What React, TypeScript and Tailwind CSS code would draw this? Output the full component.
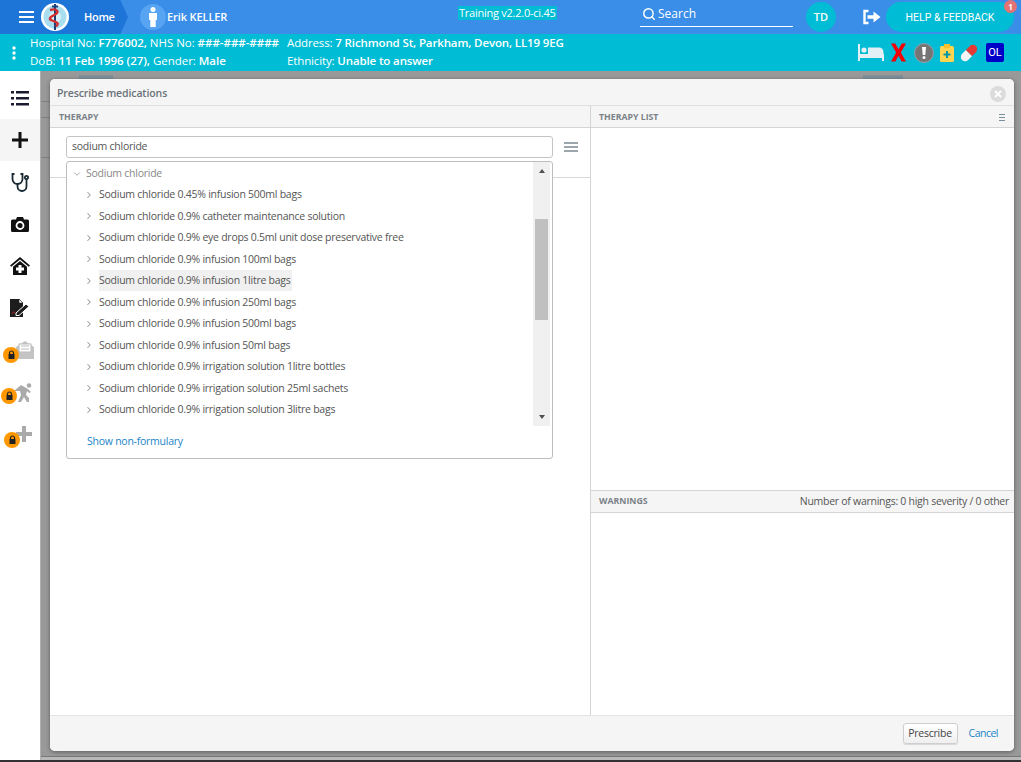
import React from "react";
import { ChevronRight, ChevronDown, Search } from "lucide-react";

const items = [
  "Sodium chloride 0.45% infusion 500ml bags",
  "Sodium chloride 0.9% catheter maintenance solution",
  "Sodium chloride 0.9% eye drops 0.5ml unit dose preservative free",
  "Sodium chloride 0.9% infusion 100ml bags",
  "Sodium chloride 0.9% infusion 1litre bags",
  "Sodium chloride 0.9% infusion 250ml bags",
  "Sodium chloride 0.9% infusion 500ml bags",
  "Sodium chloride 0.9% infusion 50ml bags",
  "Sodium chloride 0.9% irrigation solution 1litre bottles",
  "Sodium chloride 0.9% irrigation solution 25ml sachets",
  "Sodium chloride 0.9% irrigation solution 3litre bags",
];

function LockBadge({ className }: { className: string }) {
  return (
    <span className={`absolute w-[16px] h-[16px] rounded-full bg-[#ff9800] flex items-center justify-center ${className}`}>
      <svg width="9" height="10" viewBox="0 0 9 10">
        <path d="M2.500 4V3a2 2 0 0 1 4 0v1" fill="none" stroke="#222" strokeWidth="1.2" />
        <rect x="1.500" y="4" width="6" height="5" fill="#222" />
      </svg>
    </span>
  );
}

function SideIcon({ children, active }: { children: React.ReactNode; active?: boolean }) {
  return (
    <div className={`relative h-[42px] flex items-center justify-center ${active ? "bg-[#f5f5f5]" : ""}`}>{children}</div>
  );
}

export default function App() {
  return (
    <div className="w-[1021px] h-[762px] overflow-hidden flex flex-col bg-[#999999] font-['Open_Sans',sans-serif] text-[11px]">
      {/* Top bar */}
      <header className="h-[34px] shrink-0 flex items-center bg-[#3a8ee8] text-white relative">
        <div className="h-full w-[128px] bg-[#1e75d8] flex items-center pl-[19px] shrink-0 [clip-path:polygon(0_0,94%_0,100%_50%,94%_100%,0_100%)]">
          <svg width="15" height="12" viewBox="0 0 15 12" className="shrink-0">
            <rect y="0" width="15" height="2" fill="#fff" />
            <rect y="5" width="15" height="2" fill="#fff" />
            <rect y="10" width="15" height="2" fill="#fff" />
          </svg>
          <svg width="28" height="28" viewBox="0 0 28 28" className="ml-[7px] shrink-0">
            <circle cx="14" cy="14" r="14" fill="#fff" />
            <circle cx="14" cy="14" r="11.500" fill="#a9def0" />
            <circle cx="14" cy="14" r="6" fill="#d8f1f8" />
            <path d="M14 1v26" stroke="#1f3f78" strokeWidth="2" />
            <path d="M9 7c7-2 10 2 5 4.500s-7 4.500-3 6 8 2 4 6" fill="none" stroke="#d32f2f" strokeWidth="2.400" />
            <path d="M11 3.500h6" stroke="#1f3f78" strokeWidth="2" />
          </svg>
          <span className="ml-[15px] font-semibold text-[11px] tracking-[-0.3px]">Home</span>
        </div>
        <div className="w-[26px] h-[26px] rounded-full bg-[#57a4f2] flex items-center justify-center ml-[12px] shrink-0">
          <svg width="10" height="20" viewBox="0 0 10 20">
            <circle cx="5" cy="2.600" r="2.500" fill="#fff" />
            <path d="M1 6h8v7H7.700v7H2.300v-7H1z" fill="#fff" />
          </svg>
        </div>
        <span className="ml-[1px] font-semibold text-[11px] tracking-[-0.1px]">Erik KELLER</span>
        <span className="absolute left-[458px] top-[6px] bg-[#00bcd4] text-[11px] font-medium leading-[14px] px-[1px] tracking-[-0.25px]">Training v2.2.0-ci.45</span>
        <div className="absolute left-[640px] top-[2px] w-[153px] h-[25px] border-b border-white flex items-center gap-[2px] pl-[2px]">
          <Search size={14} strokeWidth={2.5} />
          <span className="text-[12px]">Search</span>
        </div>
        <div className="absolute left-[806px] top-[2px] w-[30px] h-[30px] rounded-full bg-[#00bcd4] flex items-center justify-center text-[11px] font-semibold">TD</div>
        <svg width="19" height="16" viewBox="0 0 19 16" className="absolute left-[862px] top-[9px]">
          <path d="M6.500 2H2.500v12h4" fill="none" stroke="#fff" strokeWidth="2.400" />
          <path d="M5.500 6.200h6V2.500L18.500 8l-7 5.500V9.800h-6z" fill="#fff" />
        </svg>
        <div className="absolute left-[886px] top-[2px] w-[128px] h-[30px] rounded-full bg-[#00bcd4] flex items-center justify-center text-[10.5px] font-['Roboto',sans-serif] pt-[1px]">HELP &amp; FEEDBACK</div>
        <span className="absolute left-[1004px] top-[0px] w-[13px] h-[13px] rounded-full bg-[#e57373] flex items-center justify-center text-[8px] font-bold">1</span>
      </header>

      {/* Patient bar */}
      <div className="h-[37px] shrink-0 bg-[#00bcd4] text-white flex items-center relative text-[11.5px] leading-[18px]">
        <svg width="4" height="14" viewBox="0 0 4 14" className="ml-[12px] shrink-0">
          <circle cx="2" cy="2" r="1.700" fill="#fff" />
          <circle cx="2" cy="7" r="1.700" fill="#fff" />
          <circle cx="2" cy="12" r="1.700" fill="#fff" />
        </svg>
        <div className="ml-[14px] w-[257px] shrink-0 whitespace-nowrap tracking-[-0.03px] mb-[2px]">
          <div>Hospital No: <b className="font-semibold">F776002,</b> NHS No: <b className="font-semibold">###-###-####</b></div>
          <div>DoB: <b className="font-semibold">11 Feb 1996 (27),</b> Gender: <b className="font-semibold">Male</b></div>
        </div>
        <div className="whitespace-nowrap tracking-[-0.13px] mb-[2px]">
          <div>Address: <b className="font-semibold">7 Richmond St, Parkham, Devon, LL19 9EG</b></div>
          <div>Ethnicity: <b className="font-semibold">Unable to answer</b></div>
        </div>
        <div className="ml-auto mr-[17px] flex items-center">
          <svg width="26" height="17" viewBox="0 0 26 17">
            <path d="M0 0h2v10h24v7h-2v-3H2v3H0z" fill="#e3f0f6" />
            <circle cx="6" cy="6" r="2.600" fill="#e3f0f6" />
            <path d="M10 3.500h11a4.500 4.500 0 0 1 4.500 4.500v2H10z" fill="#e3f0f6" />
          </svg>
          <svg width="15" height="19" viewBox="0 0 16 19" className="ml-[7px]">
            <path d="M0 0h4.500L8 6l3.500-6H16l-5.500 9.500L16 19h-4.700L8 13l-3.300 6H0l5.500-9.500z" fill="#f40000" />
          </svg>
          <span className="w-[20px] h-[20px] rounded-full bg-[#757575] border border-[#90a4ae] flex items-center justify-center ml-[8px]">
            <svg width="4" height="12" viewBox="0 0 4 12"><path d="M0 0h4l-.7 8H.7z" fill="#fff" /><circle cx="2" cy="10.500" r="1.500" fill="#fff" /></svg>
          </span>
          <svg width="14" height="18" viewBox="0 0 14 18" className="ml-[6px]">
            <rect x="0" y="2" width="14" height="16" rx="1.500" fill="#ffd54f" />
            <rect x="4" y="0" width="6" height="4" fill="#fbc02d" />
            <path d="M6 7h2v2.500h2.500v2H8V14H6v-2.500H3.500v-2H6z" fill="#0097a7" />
          </svg>
          <svg width="18" height="18" viewBox="0 0 18 18" className="ml-[6px]">
            <g transform="rotate(-45 9 9)">
              <path d="M9 4.700H3.500a4.300 4.300 0 0 0 0 8.600H9z" fill="#f5f5f5" />
              <path d="M9 4.700h5.500a4.300 4.300 0 0 1 0 8.600H9z" fill="#e53935" />
            </g>
          </svg>
          <span className="w-[18px] h-[19px] bg-[#0000c8] rounded-[2px] flex items-center justify-center text-[11px] ml-[8px] font-['Roboto',sans-serif]">OL</span>
        </div>
      </div>

      {/* Body */}
      <div className="flex flex-1 min-h-0">
        <aside className="w-[41px] shrink-0 bg-white border-r border-[#b0b0b0] pt-[6px]">
          <SideIcon>
            <svg width="18" height="15" viewBox="0 0 18 15">
              <g fill="#1b1b2f"><rect width="3" height="2.500" /><rect x="5" width="13" height="2.500" /><rect y="6" width="3" height="2.500" /><rect x="5" y="6" width="13" height="2.500" /><rect y="12" width="3" height="2.500" /><rect x="5" y="12" width="13" height="2.500" /></g>
            </svg>
          </SideIcon>
          <SideIcon active>
            <svg width="16" height="16" viewBox="0 0 16 16"><path d="M6.500 0h3v6.500H16v3H9.500V16h-3V9.500H0v-3h6.500z" fill="#111" /></svg>
          </SideIcon>
          <SideIcon>
            <svg width="19" height="19" viewBox="0 0 19 19" fill="none" stroke="#1a2a33" strokeWidth="1.800">
              <path d="M3.500 1H1.500v5a5 5 0 0 0 10 0V1H9.500" />
              <path d="M6.500 11v2.500a4.500 4.500 0 0 0 9 0V6" />
              <circle cx="15.500" cy="4.500" r="1.600" />
            </svg>
          </SideIcon>
          <SideIcon>
            <svg width="18" height="15" viewBox="0 0 18 15">
              <path d="M0 4a1.500 1.500 0 0 1 1.500-1.500H5L6 0h6l1 2.500h3.500A1.500 1.500 0 0 1 18 4v9.500a1.500 1.500 0 0 1-1.500 1.500h-15A1.500 1.500 0 0 1 0 13.500z" fill="#111" />
              <circle cx="9" cy="8.500" r="3.500" fill="none" stroke="#fff" strokeWidth="1.800" />
            </svg>
          </SideIcon>
          <SideIcon>
            <svg width="20" height="18" viewBox="0 0 20 18">
              <path d="M10 0 20 8.500l-1.200 1.300L10 2.500 1.200 9.800 0 8.500z" fill="#111" />
              <path d="M10 4l7 5.800V18H3V9.800z" fill="#111" />
              <path d="M8.500 8h3v2.500H14v3h-2.500V16h-3v-2.500H6v-3h2.500z" fill="#fff" />
            </svg>
          </SideIcon>
          <SideIcon>
            <svg width="20" height="18" viewBox="0 0 20 18">
              <path d="M0 0h9l4 4v14H0z" fill="#1d1d1d" />
              <path d="M9 0l4 4H9z" fill="#fff" stroke="#1d1d1d" strokeWidth=".6" />
              <path d="M6 14l10-9 3 2.500-10 9H6z" fill="#1d1d1d" stroke="#fff" strokeWidth="1" />
              <path d="M2 15c1-2 2-3 3-1" stroke="#c62828" strokeWidth="1" fill="none" />
            </svg>
          </SideIcon>
          <SideIcon>
            <svg width="18" height="18" viewBox="0 0 18 18" className="ml-[9px]">
              <path d="M0 6 9 0l9 6v12H0z" fill="#c4c4c4" />
              <rect x="3" y="3" width="12" height="8" fill="#fff" stroke="#bbb" />
              <path d="M5 5h8M5 8h8" stroke="#bbb" />
            </svg>
            <LockBadge className="left-[3px] top-[18px]" />
          </SideIcon>
          <SideIcon>
            <svg width="22" height="19" viewBox="0 0 22 19" className="ml-[9px]">
              <circle cx="15" cy="2.500" r="2.300" fill="#aaa" />
              <path d="M0 8 7 2l7 4 3 3-2 1-2-2-1 4 3 3v4h-2l-3-5-3 5H4l3-7-1-4z" fill="#aaa" />
            </svg>
            <LockBadge className="left-[1px] top-[17px]" />
          </SideIcon>
          <SideIcon>
            <svg width="16" height="16" viewBox="0 0 16 16" className="ml-[8px]"><path d="M6 0h4v6h6v4h-6v6H6v-6H0V6h6z" fill="#aaa" /></svg>
            <LockBadge className="left-[4px] top-[19px]" />
          </SideIcon>
        </aside>

        {/* Dialog area */}
        <main className="flex-1 min-w-0 flex flex-col relative">
          {/* Page showing through behind the dialog */}
          <div className="h-[8px] shrink-0 flex items-end">
            <span className="ml-[38px] w-[34px] h-[4px] bg-[#7f9099]" />
            <span className="ml-[750px] w-[40px] h-[4px] bg-[#7f9099]" />
          </div>
          <div className="absolute left-0 top-[30px] w-[9px] h-[17px] border-y border-[#808080]" />
          <div className="absolute left-0 top-[86px] w-[9px] h-[1px] bg-[#808080]" />
          <section className="ml-[9px] w-[964px] h-[672px] shrink-0 bg-white rounded-[5px] shadow-[0_1px_4px_rgba(0,0,0,0.4)] flex flex-col overflow-hidden relative text-[#555] tracking-[-0.25px]">
            <div className="h-[27px] shrink-0 bg-[#f5f5f5] border-b border-[#e0e0e0] flex items-center pl-[7px] pr-[8px] pt-[4px] justify-between">
              <span className="font-semibold text-[#6a7278] text-[10.5px] tracking-[-0.1px]">Prescribe medications</span>
              <span className="w-[16px] h-[16px] rounded-full bg-[#dcdcdc] flex items-center justify-center">
                <svg width="8" height="8" viewBox="0 0 8 8"><path d="M1 1l6 6M7 1 1 7" stroke="#fff" strokeWidth="1.800" /></svg>
              </span>
            </div>

            <div className="flex flex-1 min-h-0">
              {/* Therapy */}
              <div className="w-[541px] shrink-0 border-r border-[#d4d4d4] relative">
                <div className="h-[22px] bg-[#f5f5f5] border-b border-[#d4d4d4] flex items-center pl-[9px] pt-[2px] text-[8.75px] tracking-normal font-bold text-[#7a8288]">THERAPY</div>
                <div className="h-[50px] border-b border-[#d8d8d8] relative">
                  <div className="absolute left-[16px] top-[8px] w-[487px] h-[22px] border border-[#c4c4c4] rounded-[3px] flex items-center pl-[5px] text-[10.5px] text-[#555]">sodium chloride</div>
                  <svg width="14" height="10" viewBox="0 0 14 10" className="absolute left-[514px] top-[14px]">
                    <path d="M0 1h14M0 5h14M0 9h14" stroke="#7b8a91" strokeWidth="1.300" />
                  </svg>
                </div>

                {/* Dropdown */}
                <div className="absolute left-[16px] top-[55px] w-[487px] h-[298px] bg-white border border-[#bdbdbd] rounded-[3px] flex">
                  <div className="flex-1 min-w-0 flex flex-col pl-[5px]">
                    <div className="flex items-center h-[21px] mt-[1px] text-[#888] text-[10.5px]">
                      <ChevronDown size={10} className="text-[#999]" />
                      <span className="ml-[4px]">Sodium chloride</span>
                    </div>
                    {items.map((t, i) => (
                      <div key={t} className="flex items-center h-[21.500px] pl-[12px] text-[10.5px] text-[#555] whitespace-nowrap">
                        <ChevronRight size={10} strokeWidth={2.500} className="text-[#999] shrink-0" />
                        <span className={`ml-[5px] pr-[1px] leading-[21px] ${i === 4 ? "bg-[#f0f0f0]" : ""}`}>{t}</span>
                      </div>
                    ))}
                    <div className="mt-[13px] pl-[15px] text-[10.5px] text-[#1a85c8]">Show non-formulary</div>
                  </div>
                  <div className="w-[17px] h-[264px] mr-[2px] bg-[#f0f0f0] flex flex-col items-center relative">
                    <span className="mt-[7px] w-0 h-0 border-x-[3.500px] border-x-transparent border-b-[4px] border-b-[#505050]" />
                    <span className="absolute top-[57px] w-[13px] h-[101px] bg-[#c0c0c0]" />
                    <span className="mt-auto mb-[7px] w-0 h-0 border-x-[3.500px] border-x-transparent border-t-[4px] border-t-[#505050]" />
                  </div>
                </div>
              </div>

              {/* Right */}
              <div className="flex-1 flex flex-col min-w-0">
                <div className="h-[22px] bg-[#f5f5f5] border-b border-[#d4d4d4] flex items-center justify-between pl-[8px] pr-[9px] pt-[2px] text-[8.75px] tracking-normal font-bold text-[#7a8288]">
                  <span>THERAPY LIST</span>
                  <svg width="6" height="7" viewBox="0 0 6 7"><path d="M0 .5h6M0 3.500h6M0 6.500h6" stroke="#78909c" /></svg>
                </div>
                <div className="h-[362px]" />
                <div className="h-[23px] bg-[#f5f5f5] border-y border-[#d4d4d4] flex items-center justify-between pl-[8px] pr-[5px]">
                  <span className="text-[8.75px] tracking-normal font-bold text-[#7a8288]">WARNINGS</span>
                  <span className="text-[10.5px] text-[#555] tracking-[-0.27px]">Number of warnings: 0 high severity / 0 other</span>
                </div>
                <div className="flex-1" />
              </div>
            </div>

            <div className="h-[36px] shrink-0 bg-[#f5f5f5] border-t border-[#e4e4e4] flex items-center justify-end pr-[16px] gap-[11px] text-[10.5px]">
              <button className="w-[55px] h-[21px] rounded-[3px] border border-[#cfcfcf] bg-gradient-to-b from-white to-[#efefef] text-[#444] shadow-[0_1px_1px_rgba(0,0,0,0.12)]">Prescribe</button>
              <span className="text-[#1a85c8] tracking-[-0.5px]">Cancel</span>
            </div>
          </section>
          <div className="mt-auto h-[1px] bg-[#777777]" />
          <div className="h-[3px] bg-[#b8b8b8]" />
        </main>
      </div>
      <div className="h-[2px] shrink-0 bg-[#333333]" />
    </div>
  );
}
